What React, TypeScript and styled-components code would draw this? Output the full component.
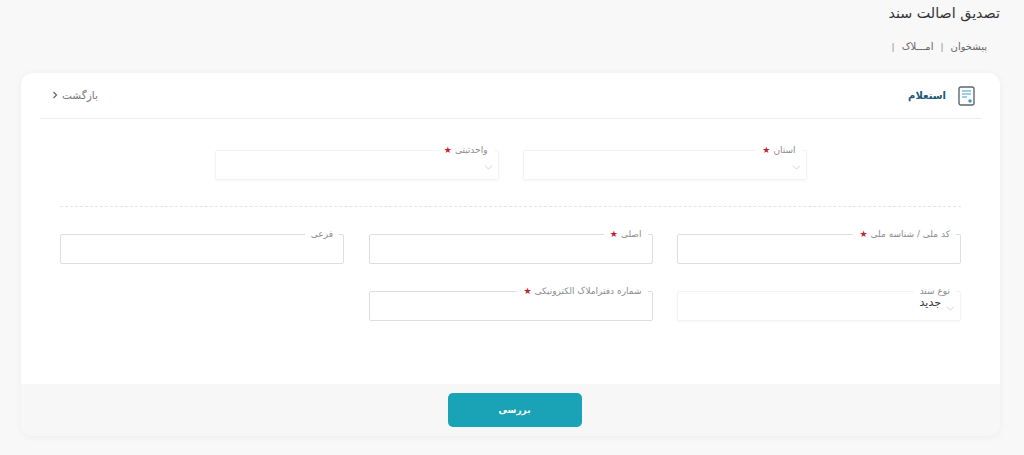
import React from "react";
import styled, { createGlobalStyle } from "styled-components";
import { ChevronDown } from "lucide-react";

const GlobalStyle = createGlobalStyle`
  html, body {
    margin: 0;
    padding: 0;
    background: #f8f8f8;
    font-family: "DejaVu Sans", "Noto Sans", sans-serif;
  }
  * { box-sizing: border-box; }
`;

const Page = styled.div`
  direction: rtl;
  width: 1024px;
  height: 455px;
  overflow: hidden;
  padding: 0 24px;
`;

const Title = styled.h1`
  margin: 0;
  padding-top: 3px;
  height: 36px;
  font-size: 14.3px;
  line-height: 20px;
  font-weight: 400;
  color: #333;
`;

const Breadcrumb = styled.div`
  display: flex;
  align-items: flex-start;
  gap: 7px;
  height: 37px;
  padding: 3px 13px 0 0;
  font-size: 10px;
  line-height: 16px;
  color: #666;
`;

const Sep = styled.span`
  color: #888;
  font-size: 9px;
`;

const Card = styled.div`
  margin-left: -3px;
  width: 979px;
  height: 363px;
  background: #fff;
  border-radius: 12px;
  box-shadow: 0 1px 8px rgba(0, 0, 0, 0.05);
  overflow: hidden;
  display: flex;
  flex-direction: column;
`;

const CardHeader = styled.div`
  margin: 0 18px 0 19px;
  height: 46px;
  border-bottom: 1px solid #eeeeee;
  display: flex;
  align-items: center;
  justify-content: space-between;
  padding: 0 7px 0 12px;
`;

const HeaderTitle = styled.div`
  display: flex;
  align-items: center;
  gap: 12px;
  font-size: 10px;
  font-weight: 700;
  color: #1d5876;
`;

const BackLink = styled.div`
  display: flex;
  align-items: center;
  gap: 4px;
  padding-bottom: 2px;
  font-size: 10.5px;
  color: #777;
`;

const Body = styled.div`
  flex: 1;
  padding: 25px 39px 0;
`;

const TopRow = styled.div`
  display: grid;
  grid-template-columns: 284px 284px;
  justify-content: center;
  column-gap: 24px;
`;

const Dashed = styled.div`
  margin: 26px 0 21px;
  border-top: 1px dashed #e4e4e4;
`;

const FormGrid = styled.div`
  display: grid;
  grid-template-columns: repeat(3, 284px);
  justify-content: space-between;
  row-gap: 21px;
`;

const Box = styled.fieldset<{ $select?: boolean }>`
  margin: 0;
  padding: 0 4px;
  height: 36px;
  min-width: 0;
  border: 1px solid ${(p) => (p.$select ? "#f3f3f3" : "#dedede")};
  border-radius: 2px;
  box-shadow: ${(p) => (p.$select ? "0 1px 3px rgba(0,0,0,0.04)" : "none")};
  display: flex;
  align-items: center;
  position: relative;
`;

const Legend = styled.legend`
  padding: 0 6px;
  font-size: 9px;
  line-height: 12px;
  color: #8c8c8c;
  white-space: nowrap;
`;

const Star = styled.span`
  color: #c4222b;
  margin-right: 3px;
  font-size: 9px;
`;

const Value = styled.span`
  font-size: 11px;
  line-height: 14px;
  color: #333;
  margin-right: 15px;
  margin-top: -12px;
`;

const Arrow = styled(ChevronDown)`
  position: absolute;
  top: 5px;
  right: 3px;
  color: #c9c9c9;
`;

const Footer = styled.div`
  height: 52px;
  background: #f7f7f7;
  display: flex;
  align-items: center;
  justify-content: center;
  padding-left: 8px;
`;

const Submit = styled.button`
  width: 134px;
  height: 34px;
  border: none;
  border-radius: 5px;
  background: #1aa3b6;
  color: #fff;
  font-family: inherit;
  font-size: 9px;
  font-weight: 700;
`;

function DocIcon() {
  return (
    <svg width="17" height="20" viewBox="0 0 17 20" fill="none">
      <rect x="1" y="1" width="15" height="18" rx="2" stroke="#5c6670" strokeWidth="1.4" />
      <path d="M4 5h9M4 8h9M4 11h5" stroke="#3f9fc0" strokeWidth="1.2" />
      <circle cx="12" cy="15" r="1.8" fill="#3f9fc0" />
    </svg>
  );
}

function BackChevron() {
  return (
    <svg width="6" height="8" viewBox="0 0 6 8" fill="none">
      <path d="M1.5 1l3 3-3 3" stroke="#666" strokeWidth="1.2" />
    </svg>
  );
}

function Field({ label, required, select, value }: { label: string; required?: boolean; select?: boolean; value?: string }) {
  return (
    <Box $select={select}>
      <Legend>
        {label}
        {required && <Star>★</Star>}
      </Legend>
      {select && <Arrow size={13} strokeWidth={1.5} />}
      {value && <Value>{value}</Value>}
    </Box>
  );
}

export default function App() {
  return (
    <Page>
      <GlobalStyle />
      <Title>تصدیق اصالت سند</Title>
      <Breadcrumb>
        <span>پیشخوان</span>
        <Sep>|</Sep>
        <span>امـــلاک</span>
        <Sep>|</Sep>
      </Breadcrumb>
      <Card>
        <CardHeader>
          <HeaderTitle>
            <DocIcon />
            <span>استعلام</span>
          </HeaderTitle>
          <BackLink>
            <span>بازگشت</span>
            <BackChevron />
          </BackLink>
        </CardHeader>
        <Body>
          <TopRow>
            <Field label="استان" required select />
            <Field label="واحدثبتی" required select />
          </TopRow>
          <Dashed />
          <FormGrid>
            <Field label="کد ملی / شناسه ملی" required />
            <Field label="اصلی" required />
            <Field label="فرعی" />
            <Field label="نوع سند" select value="جدید" />
            <Field label="شماره دفتراملاک الکترونیکی" required />
          </FormGrid>
        </Body>
        <Footer>
          <Submit>بررسی</Submit>
        </Footer>
      </Card>
    </Page>
  );
}
